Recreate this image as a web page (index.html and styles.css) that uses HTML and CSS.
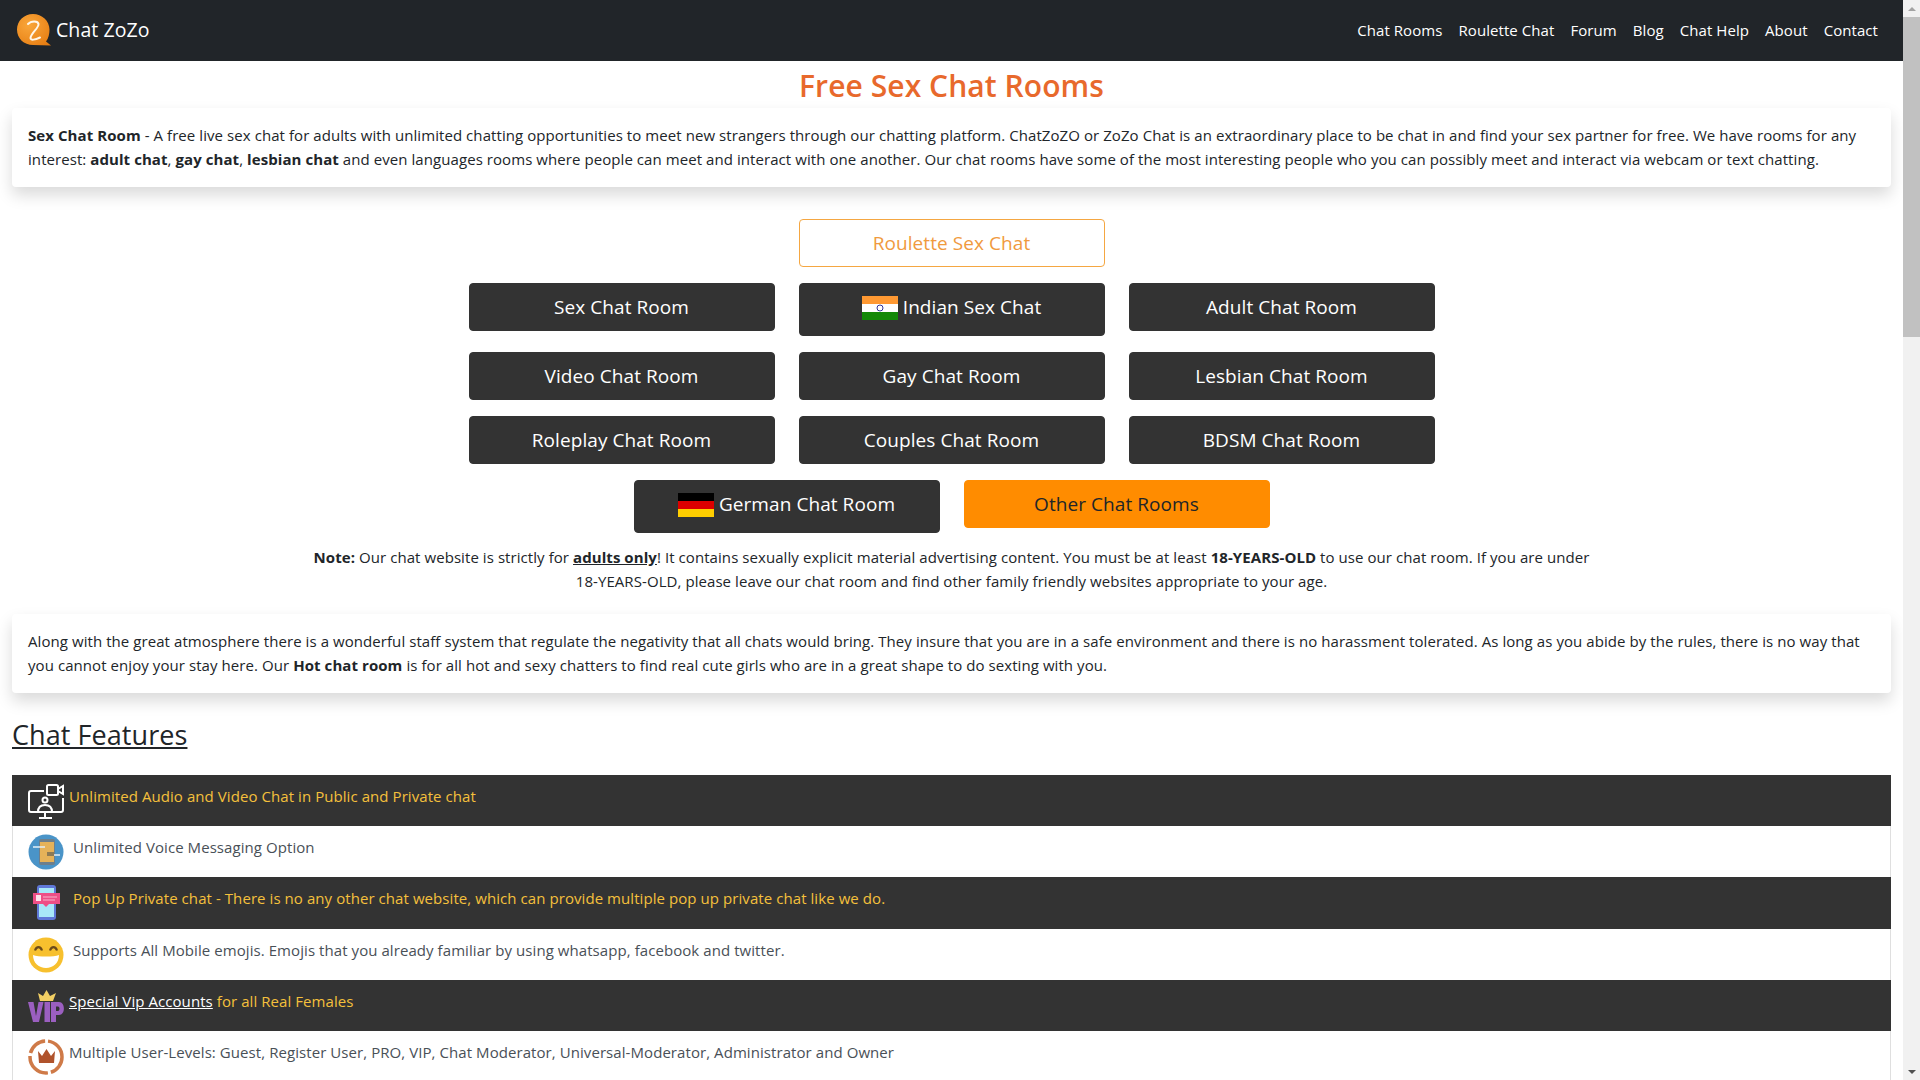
FILE: index.html
```html
<!DOCTYPE html>
<html>

<head>
    <meta charset="utf-8">
    <title>Free Sex Chat Rooms</title>
    <link rel="stylesheet" href="styles.css">
</head>

<body>
    <div class="page">
        <nav class="navbar">
            <a class="brand" href="#">
                <svg class="logo" viewBox="0 0 36 34">
                    <defs>
                        <radialGradient id="logoFill" cx="0.35" cy="0.35" r="0.8">
                            <stop offset="0" stop-color="#f9a63a"/>
                            <stop offset="1" stop-color="#e67d12"/>
                        </radialGradient>
                    </defs>
                    <path d="M17 1C8 1 1 8 1 16.500C1 25.500 8 32 17 32L35 32.500L30 28.500C32.500 25.500 33.500 21 33.500 16.500C33.500 8 26 1 17 1Z" fill="url(#logoFill)"/>
                    <path d="M12 11C15 7.500 22 7.500 22.500 11C23 15 15 20 14.500 25C14.500 27.500 19 27 24 24.500" fill="none" stroke="#fff6e8" stroke-width="2" stroke-linecap="round"/>
                </svg>
                <span>Chat ZoZo</span>
            </a>
            <ul class="nav-links">
                <li><a href="#">Chat Rooms</a></li>
                <li><a href="#">Roulette Chat</a></li>
                <li><a href="#">Forum</a></li>
                <li><a href="#">Blog</a></li>
                <li><a href="#">Chat Help</a></li>
                <li><a href="#">About</a></li>
                <li><a href="#">Contact</a></li>
            </ul>
        </nav>

        <main class="content">
            <h1>Free Sex Chat Rooms</h1>

            <div class="card">
                <b>Sex Chat Room</b> - A free live sex chat for adults with unlimited chatting opportunities to meet new strangers through our chatting platform. ChatZoZO or ZoZo Chat is an extraordinary place to be chat in and find your sex partner for free. We have rooms for any interest: <b>adult chat</b>, <b>gay chat</b>, <b>lesbian chat</b> and even languages rooms where people can meet and interact with one another. Our chat rooms have some of the most interesting people who you can possibly meet and interact via webcam or text chatting.
            </div>

            <div class="rooms">
                <div class="room-row">
                    <a class="btn btn-outline" href="#">Roulette Sex Chat</a>
                </div>
                <div class="room-row">
                    <a class="btn" href="#">Sex Chat Room</a>
                    <a class="btn btn-flag" href="#">
                        <svg class="flag" viewBox="0 0 36 24">
                            <rect width="36" height="8" fill="#ff9933"/>
                            <rect y="8" width="36" height="8" fill="#ffffff"/>
                            <rect y="16" width="36" height="8" fill="#138808"/>
                            <circle cx="18" cy="12" r="3" fill="none" stroke="#000080" stroke-width="0.800"/>
                        </svg>
                        Indian Sex Chat
                    </a>
                    <a class="btn" href="#">Adult Chat Room</a>
                </div>
                <div class="room-row">
                    <a class="btn" href="#">Video Chat Room</a>
                    <a class="btn" href="#">Gay Chat Room</a>
                    <a class="btn" href="#">Lesbian Chat Room</a>
                </div>
                <div class="room-row">
                    <a class="btn" href="#">Roleplay Chat Room</a>
                    <a class="btn" href="#">Couples Chat Room</a>
                    <a class="btn" href="#">BDSM Chat Room</a>
                </div>
                <div class="room-row">
                    <a class="btn btn-flag" href="#">
                        <svg class="flag" viewBox="0 0 36 24">
                            <rect width="36" height="8" fill="#000000"/>
                            <rect y="8" width="36" height="8" fill="#dd0000"/>
                            <rect y="16" width="36" height="8" fill="#ffce00"/>
                        </svg>
                        German Chat Room
                    </a>
                    <a class="btn btn-orange" href="#">Other Chat Rooms</a>
                </div>
            </div>

            <p class="note">
                <b>Note:</b> Our chat website is strictly for <a href="#"><b>adults only</b></a>! It contains sexually explicit material advertising content. You must be at least <b>18-YEARS-OLD</b> to use our chat room. If you are under<br>18-YEARS-OLD, please leave our chat room and find other family friendly websites appropriate to your age.
            </p>

            <div class="card">
                Along with the great atmosphere there is a wonderful staff system that regulate the negativity that all chats would bring. They insure that you are in a safe environment and there is no harassment tolerated. As long as you abide by the rules, there is no way that you cannot enjoy your stay here. Our <b>Hot chat room</b> is for all hot and sexy chatters to find real cute girls who are in a great shape to do sexting with you.
            </div>

            <h2>Chat Features</h2>

            <ul class="features">
                <li class="dark">
                    <svg class="icon" viewBox="0 0 36 36" fill="none" stroke="#fff" stroke-width="2">
                        <path d="M16 8H3Q1 8 1 10V27Q1 29 3 29H33Q35 29 35 27V15"/>
                        <rect x="19" y="2" width="11" height="10" rx="1.500"/>
                        <path d="M30 6L35 3V11L30 8"/>
                        <circle cx="17" cy="17" r="2.500"/>
                        <path d="M10 29C10 24 12 22 17 22C22 22 24 24 24 29"/>
                        <path d="M17 29V35M11 35H24"/>
                    </svg>
                    <span class="text">Unlimited Audio and Video Chat in Public and Private chat</span>
                </li>
                <li>
                    <svg class="icon" viewBox="0 0 36 36">
                        <circle cx="18" cy="18" r="17.500" fill="#4a94c8"/>
                        <rect x="11" y="5" width="16" height="26" rx="2" fill="#6d7f8c"/>
                        <rect x="12" y="8" width="14" height="20" fill="#e5b259"/>
                        <path d="M5 13H17M20 21H32" stroke="#e4f0f7" stroke-width="1.500"/>
                        <rect x="19" y="18" width="7" height="4" fill="#8c7a55"/>
                    </svg>
                    <span class="text gap">Unlimited Voice Messaging Option</span>
                </li>
                <li class="dark">
                    <svg class="icon" viewBox="0 0 36 36">
                        <rect x="9" y="0" width="19" height="35" rx="3" fill="#5f78d8"/>
                        <rect x="11" y="3" width="15" height="29" fill="#a8e8f8"/>
                        <rect x="5" y="8" width="27" height="11" fill="#ee4f86"/>
                        <path d="M15 19H21L18 22Z" fill="#ee4f86"/>
                        <rect x="8" y="10" width="5" height="6" fill="#fbe4ec"/>
                        <path d="M15 12H29M15 15H27" stroke="#f7b5cc" stroke-width="1.200"/>
                    </svg>
                    <span class="text gap">Pop Up Private chat - There is no any other chat website, which can provide multiple pop up private chat like we do.</span>
                </li>
                <li>
                    <svg class="icon" viewBox="0 0 36 36">
                        <circle cx="18" cy="18" r="17.500" fill="#f7c02e"/>
                        <path d="M5 18C10 20 26 20 31 18C31 26 25 31 18 31C11 31 5 26 5 18Z" fill="#fff"/>
                        <path d="M7 13.500C8.500 9 12.500 9 14 13.500M22 13.500C23.500 9 27.500 9 29 13.500" fill="none" stroke="#6b4a1a" stroke-width="2.200"/>
                    </svg>
                    <span class="text gap">Supports All Mobile emojis. Emojis that you already familiar by using whatsapp, facebook and twitter.</span>
                </li>
                <li class="dark">
                    <svg class="icon" viewBox="0 0 36 36">
                        <path d="M12 13L10 5L15 8L18.500 2L22 8L28 5L25 13Z" fill="#f2cf63"/>
                        <path d="M0 14H5.500L8 28L10.500 14H15.500L11 34H5ZM16.500 14H22V34H16.500ZM23 14H31C37.500 14 37.500 27 31 27H28V34H23ZM28 18.500V23H30C32 23 32 18.500 30 18.500Z" fill="#9b5fc0"/>
                    </svg>
                    <span class="text"><a href="#">Special Vip Accounts</a> for all Real Females</span>
                </li>
                <li>
                    <svg class="icon" viewBox="0 0 36 36">
                        <circle cx="18" cy="18" r="16" fill="none" stroke="#cf7a48" stroke-width="3.500" stroke-dasharray="20 3 28 3"/>
                        <path d="M11 24L10 12L14 17L18.500 10L23 17L27 12L26 24Z" fill="#b0532c"/>
                    </svg>
                    <span class="text">Multiple User-Levels: Guest, Register User, PRO, VIP, Chat Moderator, Universal-Moderator, Administrator and Owner</span>
                </li>
            </ul>
        </main>
    </div>

    <div class="scrollbar">
        <div class="arrow arrow-up"></div>
        <div class="thumb"></div>
        <div class="arrow arrow-down"></div>
    </div>
</body>

</html>
```

FILE: styles.css
```css
html,
body {
    height: 100%;
    margin: 0;
    overflow: hidden;
}

body {
    display: flex;
    font-family: "Open Sans", "Noto Sans", sans-serif;
    font-size: 15px;
    line-height: 24px;
    letter-spacing: 0.07px;
    color: #212529;
    background: #fff;
}

a {
    color: inherit;
}

b {
    font-weight: 700;
}

.page {
    flex: 1;
    min-width: 0;
    height: 100%;
    overflow: hidden;
}

/* top bar */
.navbar {
    height: 61px;
    box-sizing: border-box;
    padding: 0 17px 2px 16px;
    display: flex;
    justify-content: space-between;
    align-items: center;
    background: #212529;
}

.brand {
    display: flex;
    align-items: center;
    gap: 4px;
    color: #fff;
    text-decoration: none;
    font-size: 19.5px;
}

.logo {
    width: 36px;
    height: 34px;
}

.nav-links {
    list-style: none;
    margin: 0;
    padding: 0;
    display: flex;
}

.nav-links a {
    display: block;
    padding: 8px;
    color: #fff;
    text-decoration: none;
}

.content {
    padding: 0 12px;
}

h1 {
    margin: 0;
    padding-top: 5px;
    height: 47px;
    box-sizing: border-box;
    text-align: center;
    font-size: 30px;
    line-height: 40px;
    font-weight: 600;
    color: #e8692c;
}

.card {
    padding: 15px 16px 16px;
    background: #fff;
    border-radius: 4px;
    box-shadow: 0 8px 16px rgba(0, 0, 0, 0.15);
}

/* room buttons */
.rooms {
    margin-top: 32px;
}

.room-row {
    display: flex;
    justify-content: center;
    align-items: flex-start;
    gap: 24px;
    margin-bottom: 16px;
}

.room-row:last-child {
    margin-bottom: 12px;
}

.btn {
    width: 306px;
    box-sizing: border-box;
    padding: 9px 12px;
    border: 1px solid #333;
    border-radius: 4px;
    background: #333;
    color: #fff;
    text-align: center;
    text-decoration: none;
    font-size: 19px;
    line-height: 28px;
}

.btn-flag {
    padding-bottom: 14px;
}

.btn-outline {
    background: #fff;
    border-color: #f5a742;
    color: #f09a3e;
}

.btn-orange {
    background: #ff8c00;
    border-color: #ff8c00;
    color: #212529;
}

.flag {
    width: 36px;
    height: 24px;
    vertical-align: -6px;
}

.note {
    margin: 0 0 21px;
    padding: 0 12px;
    text-align: center;
}

h2 {
    margin: 24px 0 22px;
    font-size: 27px;
    line-height: 36px;
    font-weight: 500;
    text-decoration: underline;
}

/* feature list */
.features {
    list-style: none;
    margin: 0;
    padding: 0;
    color: #495057;
}

.features li {
    height: 51.2px;
    box-sizing: border-box;
    padding: 8px 15px;
    display: flex;
    align-items: flex-start;
    border-left: 1px solid #dfdfdf;
    border-right: 1px solid #dfdfdf;
}

.features .dark {
    padding: 8px 16px;
    border: none;
    background: #333;
    color: #f5c03c;
}

.features a {
    color: #fff;
}

.icon {
    flex: none;
    width: 36px;
    height: 36px;
}

.text {
    margin-left: 5px;
    padding-top: 1px;
}

.features .gap {
    margin-left: 9px;
}

/* drawn scrollbar, the real one does not show in the picture */
.scrollbar {
    flex: none;
    width: 17px;
    height: 100%;
    display: flex;
    flex-direction: column;
    background: #f1f1f1;
}

.arrow {
    flex: none;
    height: 17px;
    display: flex;
    justify-content: center;
    align-items: center;
}

.arrow::before {
    content: "";
    border-left: 4px solid transparent;
    border-right: 4px solid transparent;
}

.arrow-up::before {
    border-bottom: 4px solid #a3a3a3;
}

.arrow-down {
    margin-top: auto;
}

.arrow-down::before {
    border-top: 4px solid #505050;
}

.thumb {
    height: 320px;
    background: #c1c1c1;
}
```
